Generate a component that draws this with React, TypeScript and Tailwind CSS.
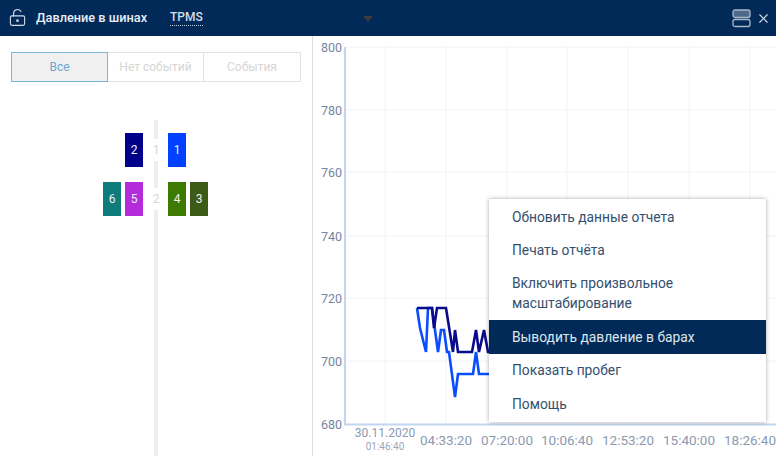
import { LockKeyholeOpen, X } from "lucide-react"

const ticks = [
    { label: "800", y: 47 },
    { label: "780", y: 110 },
    { label: "760", y: 172 },
    { label: "740", y: 236 },
    { label: "720", y: 298 },
    { label: "700", y: 361 },
    { label: "680", y: 424 },
]
const gridX = [385, 446, 507, 567, 628, 689, 750]
const times = [
    { label: "04:33:20", x: 446 },
    { label: "07:20:00", x: 507 },
    { label: "10:06:40", x: 567 },
    { label: "12:53:20", x: 628 },
    { label: "15:40:00", x: 689 },
    { label: "18:26:40", x: 750 },
]

const darkLine = "417,308 432,308 434,328 437,308 446,308 453,352 455,330 458,352 472,352 476,330 479,352 484,330 488,352 495,352"
const blueLine = "417,308 420,328 426,352 428,308 432,308 438,352 441,330 444,330 447,352 449,352 455,397 458,374 473,374 476,352 479,374 495,374"

const menuItems = ["Обновить данные отчета", "Печать отчёта", "Включить произвольное масштабирование", "Выводить давление в барах", "Показать пробег", "Помощь"]

function Tire(props: { n: number; color: string }) {
    return (
        <div className={`flex h-[34px] w-[18px] items-center justify-center text-[12px] text-[#eef0f6] ${props.color}`}>
            {props.n}
        </div>
    )
}

function Axle(props: { n: number; left: React.ReactNode; right: React.ReactNode }) {
    return (
        <div className="grid grid-cols-[143px_25px_1fr] items-center">
            <div className="flex justify-end gap-1">{props.left}</div>
            <div className="relative z-10 mx-auto bg-white py-[3px] pl-[1px] text-center text-[12px] leading-[16px] text-[#d4d4d4]">{props.n}</div>
            <div className="flex gap-1">{props.right}</div>
        </div>
    )
}

export default function App() {
    return (
        <div className="flex h-[456px] w-[776px] flex-col overflow-hidden bg-white font-['Roboto',sans-serif]">
            {/* header */}
            <div className="flex h-9 shrink-0 items-center bg-[#012a58] text-white">
                <LockKeyholeOpen size={19} strokeWidth={1.4} className="ml-[8px] -translate-y-[1px] text-[#d5dce6]" />
                <span className="ml-[9px] text-[12.75px] font-medium text-[#e8edf3]">Давление в шинах</span>
                <span className="ml-[23px] border-b border-dotted border-[#c7d2e0] text-[12px] font-medium leading-[15px] text-[#d5dce6]">TPMS</span>
                <div className="ml-[160px] mt-[1px] h-0 w-0 border-x-[5px] border-t-[6px] border-x-transparent border-t-[#3b3a38]" />
                <svg width="19" height="20" viewBox="0 0 19 20" fill="none" stroke="#a9b9cc" strokeWidth="1.3" className="ml-auto">
                    <rect x="1" y="2" width="17" height="7.5" rx="2" fill="#4d6a8c" />
                    <rect x="1" y="11.5" width="17" height="7" rx="2" />
                </svg>
                <X size={15} strokeWidth={1.8} className="mx-[5px] text-[#d5dce6]" />
            </div>

            <div className="flex min-h-0 flex-1">
                {/* left panel */}
                <div className="relative w-[313px] shrink-0 border-r border-[#dcdcdc]">
                    <div className="ml-[11px] mt-4 flex h-[30px] w-[290px] text-[12px]">
                        <div className="flex w-[97px] items-center justify-center border border-[#7fb5d6] bg-[#f0f0f0] text-[#6ea6cc]">Все</div>
                        <div className="flex w-[96px] items-center justify-center border-y border-r border-[#e2e2e2] text-[#d6d6d6]">Нет событий</div>
                        <div className="flex w-[97px] items-center justify-center border-y border-r border-[#e2e2e2] text-[#d6d6d6]">События</div>
                    </div>
                    <div className="absolute bottom-0 left-[154px] top-[84px] w-1 bg-[#eeeeee]" />
                    <div className="mt-[51px] flex flex-col gap-[15px]">
                        <Axle n={1} left={<Tire n={2} color="bg-[#00008b]" />} right={<Tire n={1} color="bg-[#0040ff]" />} />
                        <Axle
                            n={2}
                            left={<><Tire n={6} color="bg-[#0f7c7c]" /><Tire n={5} color="bg-[#b42bdc]" /></>}
                            right={<><Tire n={4} color="bg-[#3c7a00]" /><Tire n={3} color="bg-[#3d5a17]" /></>}
                        />
                    </div>
                </div>

                {/* chart */}
                <div className="relative min-w-0 flex-1">
                    <svg viewBox="313 36 463 420" className="h-full w-full font-['Roboto',sans-serif]">
                        {ticks.slice(0, -1).map(t => (
                            <line key={t.y} x1="345" x2="776" y1={t.y} y2={t.y} stroke="#eef2f8" />
                        ))}
                        {gridX.map(x => (
                            <line key={x} x1={x} x2={x} y1="47" y2="424" stroke="#eef2f8" />
                        ))}
                        <polyline points={blueLine} fill="none" stroke="#0a4dff" strokeWidth="2.6" />
                        <polyline points={darkLine} fill="none" stroke="#0a0a8c" strokeWidth="2.6" />
                        <line x1="345" x2="345" y1="47" y2="425" stroke="#c2d6ee" strokeWidth="2" />
                        <line x1="344" x2="776" y1="424.5" y2="424.5" stroke="#c2d6ee" strokeWidth="2" />
                        {ticks.map(t => (
                            <text key={t.label} x="342" y={t.y + 5} textAnchor="end" fontSize="12.5" fill="#76859f">{t.label}</text>
                        ))}
                        {times.map(t => (
                            <text key={t.label} x={t.x} y="445" textAnchor="middle" fontSize="13.5" fill="#8c9ab0">{t.label}</text>
                        ))}
                        <text x="385" y="437" textAnchor="middle" fontSize="12" fill="#8c9ab0">30.11.2020</text>
                        <text x="385" y="450" textAnchor="middle" fontSize="10" fill="#9aa6b8">01:46:40</text>
                    </svg>

                    {/* context menu */}
                    <div className="absolute left-[176px] top-[163px] w-[277px] bg-white pb-[2px] pt-[1px] text-[13.8px] leading-[20px] text-[#33506f] shadow-[0_0_4px_rgba(0,0,0,0.35)]">
                        {menuItems.map(item => (
                            <div
                                key={item}
                                className={item.startsWith("Выводить")
                                    ? "bg-[#012a58] px-[23px] py-[6.7px] text-[#dfe6ee]"
                                    : "px-[23px] py-[6.7px]"}
                            >
                                {item === "Включить произвольное масштабирование"
                                    ? <>Включить произвольное<br />масштабирование</>
                                    : item}
                            </div>
                        ))}
                    </div>
                </div>
            </div>
        </div>
    )
}
